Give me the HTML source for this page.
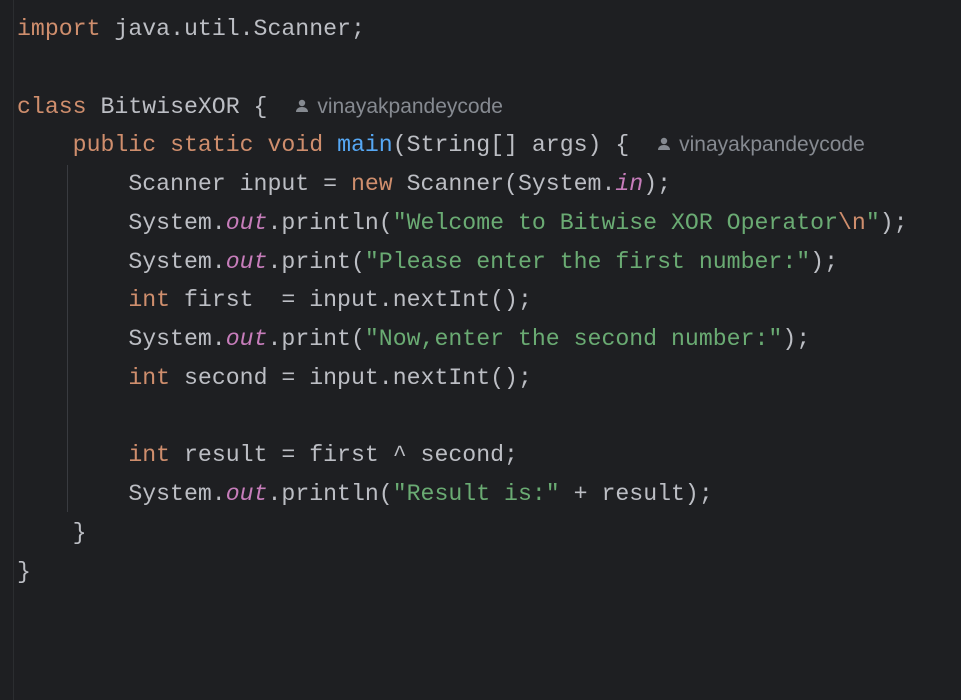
<!DOCTYPE html>
<html><head><style>
body{margin:0;width:961px;height:700px;background:#1e1f22;overflow:hidden;position:relative}
.b{position:absolute;left:13px;top:0;width:1px;height:700px;background:#2b2d30}
.g{position:absolute;left:67px;top:165px;width:1px;height:347px;background:#393b40}
pre{margin:0;position:absolute;left:17px;top:10px;font-family:"Liberation Mono",monospace;font-size:23.2px;line-height:38.75px;color:#bcbec4}
.k{color:#cf8e6d}.s{color:#6aab73}.f{color:#c77dbb;font-style:italic}.m{color:#56a8f5}
.h{font-family:"Liberation Sans",sans-serif;font-size:21px;line-height:0;color:#868a91;position:relative;top:0px}
.h svg{vertical-align:0px;margin-right:8px}
</style></head><body>
<div class="b"></div><div class="g"></div>
<pre><span class="k">import</span> java.util.Scanner;

<span class="k">class</span> BitwiseXOR {  <span class="h"><svg width="14" height="14" viewBox="0 0 14 14"><circle cx="7" cy="4" r="3.2" fill="#868a91"/><path d="M1 13c0-3.5 3-5 6-5s6 1.5 6 5z" fill="#868a91"/></svg>vinayakpandeycode</span>
    <span class="k">public static void</span> <span class="m">main</span>(String[] args) {  <span class="h"><svg width="14" height="14" viewBox="0 0 14 14"><circle cx="7" cy="4" r="3.2" fill="#868a91"/><path d="M1 13c0-3.5 3-5 6-5s6 1.5 6 5z" fill="#868a91"/></svg>vinayakpandeycode</span>
        Scanner input = <span class="k">new</span> Scanner(System.<span class="f">in</span>);
        System.<span class="f">out</span>.println(<span class="s">"Welcome to Bitwise XOR Operator<span class="k">\n</span>"</span>);
        System.<span class="f">out</span>.print(<span class="s">"Please enter the first number:"</span>);
        <span class="k">int</span> first  = input.nextInt();
        System.<span class="f">out</span>.print(<span class="s">"Now,enter the second number:"</span>);
        <span class="k">int</span> second = input.nextInt();

        <span class="k">int</span> result = first ^ second;
        System.<span class="f">out</span>.println(<span class="s">"Result is:"</span> + result);
    }
}</pre>
</body></html>
